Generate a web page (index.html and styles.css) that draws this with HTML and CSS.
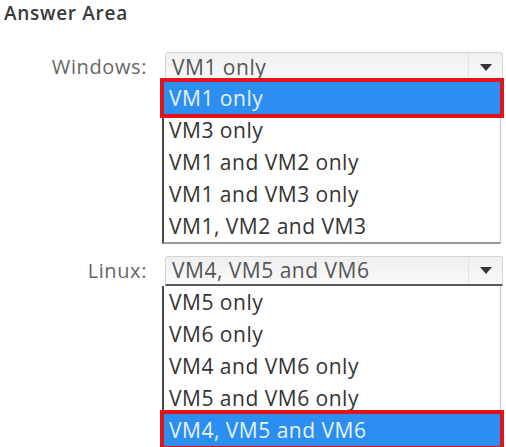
FILE: index.html
```html
<!DOCTYPE html>
<html lang="en">
  <head>
    <meta charset="UTF-8" />
    <meta name="viewport" content="width=device-width, initial-scale=1.0" />
    <title>Answer Area</title>
    <link rel="stylesheet" href="styles.css">
  </head>
  <body>
    <h1 class="title">Answer Area</h1>
    <div class="answer">
      <div class="label">Windows:</div>
      <div class="dropdown">
        <div class="select">
          <span class="value">VM1 only</span>
          <span class="arrow"></span>
        </div>
        <ul class="list">
          <li class="picked">VM1 only</li>
          <li>VM3 only</li>
          <li>VM1 and VM2 only</li>
          <li>VM1 and VM3 only</li>
          <li>VM1, VM2 and VM3</li>
        </ul>
      </div>

      <div class="label">Linux:</div>
      <div class="dropdown">
        <div class="select open">
          <span class="value">VM4, VM5 and VM6</span>
          <span class="arrow"></span>
        </div>
        <ul class="list">
          <li>VM5 only</li>
          <li>VM6 only</li>
          <li>VM4 and VM6 only</li>
          <li>VM5 and VM6 only</li>
          <li class="picked">VM4, VM5 and VM6</li>
        </ul>
      </div>
    </div>
  </body>
</html>
```

FILE: styles.css
```css
* {
  box-sizing: border-box;
}
body {
  margin: 0;
  padding: 0;
  background-color: #fff;
  font-family: "Open Sans", "Noto Sans", sans-serif;
  overflow: hidden;
}
.title {
  margin: 0;
  padding: 1px 0 0 4px;
  font-size: 19px;
  font-weight: 600;
  line-height: 24px;
  letter-spacing: 0.7px;
  color: #3a3a3a;
}
.answer {
  display: grid;
  grid-template-columns: 162px 341px;
  row-gap: 12px;
  margin-top: 27px;
}
.label {
  text-align: right;
  padding-right: 15px;
  font-size: 20px;
  line-height: 30px;
  letter-spacing: 0.6px;
  color: #666;
}
.dropdown {
  display: flex;
  flex-direction: column;
}
.select {
  display: flex;
  align-items: center;
  height: 30px;
  margin-left: 3px;
  border: 1px solid #d6d6d6;
  border-radius: 3px;
  background: linear-gradient(#efefef, #fafafa);
}
.select.open {
  border-bottom: 2px solid #5a5a5a;
  border-radius: 3px 3px 0 0;
}
.value {
  flex: 1;
  padding-left: 6px;
  font-size: 21px;
  line-height: 27px;
  letter-spacing: 0.5px;
  color: #555;
  white-space: nowrap;
}
.arrow {
  align-self: stretch;
  width: 34px;
  border-left: 1px solid #e2e2e2;
  display: flex;
  justify-content: center;
  align-items: center;
}
.arrow::before {
  content: "";
  border-left: 6px solid transparent;
  border-right: 6px solid transparent;
  border-top: 7px solid #333;
}
.list {
  list-style: none;
  margin: 0 2px 0 0;
  padding: 0;
  border-left: 2px solid #4a4a4a;
  border-right: 1px solid #c8c8c8;
  border-bottom: 2px solid #999;
  background-color: #fff;
}
.list li {
  height: 32px;
  padding-left: 5px;
  font-size: 21px;
  line-height: 32px;
  letter-spacing: 0.5px;
  color: #333;
  white-space: nowrap;
}
.list li.picked {
  position: relative;
  z-index: 1;
  background-color: #2b8ef0;
  color: #e6f3ff;
  outline: 4px solid #e3131b;
}
```
